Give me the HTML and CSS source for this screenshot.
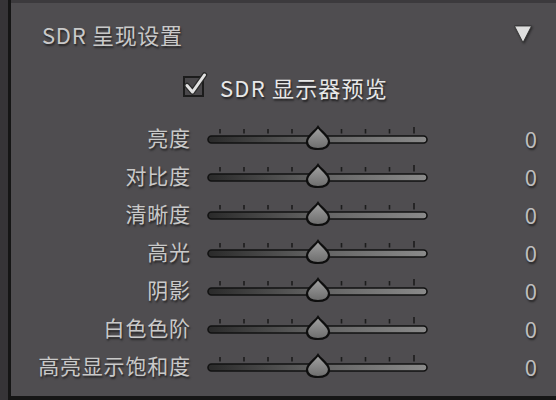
FILE: index.html
```html
<!DOCTYPE html>
<html lang="zh">
<head>
<meta charset="utf-8">
<link rel="stylesheet" href="styles.css">
</head>
<body>
<div class="defs">
  <svg width="0" height="0">
    <defs>
      <linearGradient id="trk" x1="0" y1="0" x2="1" y2="0">
        <stop offset="0" stop-color="#2a2a2a"/>
        <stop offset="0.45" stop-color="#5e5e5e"/>
        <stop offset="1" stop-color="#8a8a8a"/>
      </linearGradient>
      <linearGradient id="thm" x1="0" y1="0" x2="0" y2="1">
        <stop offset="0" stop-color="#a2a2a2"/>
        <stop offset="1" stop-color="#6c6c6c"/>
      </linearGradient>
      <symbol id="sl" viewBox="0 0 222 26">
        <g stroke="#1c1c1c" stroke-width="1.6">
          <line x1="13" y1="4" x2="13" y2="8.5"/>
          <line x1="37" y1="4" x2="37" y2="8.5"/>
          <line x1="61" y1="4" x2="61" y2="8.5"/>
          <line x1="85" y1="4" x2="85" y2="8.5"/>
          <line x1="134.5" y1="4" x2="134.5" y2="8.5"/>
          <line x1="158.5" y1="4" x2="158.5" y2="8.5"/>
          <line x1="182.5" y1="4" x2="182.5" y2="8.5"/>
          <line x1="207" y1="2" x2="207" y2="8.5"/>
        </g>
        <rect x="1" y="11" width="219" height="7" rx="3.5" fill="url(#trk)" stroke="#121212" stroke-width="1.6"/>
        <path d="M111 2 C114 6.5 122 11 122 16.5 C122 21.8 117 24 111 24 C105 24 100 21.8 100 16.5 C100 11 108 6.5 111 2 Z" fill="url(#thm)" stroke="#0e0e0e" stroke-width="2.2"/>
      </symbol>
    </defs>
  </svg>
</div>
<div class="app">
  <div class="strip"></div>
  <div class="panel">
    <div class="header">
      <span class="title">SDR 呈现设置</span>
      <svg class="tri" width="20" height="20" viewBox="0 0 20 20"><path d="M1.5 2 L18.5 2 L10 18.5 Z" fill="#dedede" stroke="#2a2a2a" stroke-width="0.8" stroke-linejoin="round"/></svg>
    </div>
    <div class="check-row">
      <svg class="check" width="26" height="26" viewBox="0 0 26 26">
        <rect x="2" y="6" width="19" height="19" fill="#4a484b" stroke="#1c1c1c" stroke-width="2"/>
        <path d="M5 14.5 L10.5 21 L22.5 4" fill="none" stroke="#2a2a2a" stroke-width="5.5" stroke-linecap="round" stroke-linejoin="round"/>
        <path d="M5 14.5 L10.5 21 L22.5 4" fill="none" stroke="#e2e2e2" stroke-width="3" stroke-linecap="round" stroke-linejoin="round"/>
      </svg>
      <span class="check-label">SDR 显示器预览</span>
    </div>
    <div class="rows">
      <div class="row"><span class="label">亮度</span><svg class="slider" width="222" height="26"><use href="#sl"/></svg><span class="val">0</span></div>
      <div class="row"><span class="label">对比度</span><svg class="slider" width="222" height="26"><use href="#sl"/></svg><span class="val">0</span></div>
      <div class="row"><span class="label">清晰度</span><svg class="slider" width="222" height="26"><use href="#sl"/></svg><span class="val">0</span></div>
      <div class="row"><span class="label">高光</span><svg class="slider" width="222" height="26"><use href="#sl"/></svg><span class="val">0</span></div>
      <div class="row"><span class="label">阴影</span><svg class="slider" width="222" height="26"><use href="#sl"/></svg><span class="val">0</span></div>
      <div class="row"><span class="label">白色色阶</span><svg class="slider" width="222" height="26"><use href="#sl"/></svg><span class="val">0</span></div>
      <div class="row"><span class="label">高亮显示饱和度</span><svg class="slider" width="222" height="26"><use href="#sl"/></svg><span class="val">0</span></div>
    </div>
  </div>
</div>
</body>
</html>
```
FILE: styles.css
```css
html, body {
  margin: 0;
  padding: 0;
  background: #363437;
}
.defs {
  height: 0;
  overflow: hidden;
}
.app {
  display: flex;
  width: 556px;
  height: 400px;
  font-family: "Noto Sans CJK SC", "Noto Sans", sans-serif;
}
.strip {
  width: 8px;
  background: #363437;
  border-right: 3px solid #151515;
  flex: none;
}
.panel {
  flex: 1;
  background: #4f4d50;
  border-top: 3px solid #3c3a3d;
  border-bottom: 4px solid #161616;
  display: flex;
  flex-direction: column;
}
.header {
  height: 62px;
  padding: 0 23px 4px 31px;
  display: flex;
  align-items: center;
  justify-content: space-between;
}
.title {
  font-size: 22px;
  color: #c9c9c9;
  letter-spacing: 0.7px;
  text-shadow: 1px 2px 2px rgba(0, 0, 0, 0.55);
}
.tri {
  display: block;
  filter: drop-shadow(1px 1px 1px rgba(0,0,0,0.5));
}
.check-row {
  height: 36px;
  display: flex;
  align-items: center;
  padding-left: 171px;
  gap: 12px;
}
.check {
  display: block;
  margin-top: -6px;
}
.check-label {
  font-size: 22px;
  color: #e8e8e8;
  letter-spacing: 1.2px;
  text-shadow: 1px 2px 2px rgba(0, 0, 0, 0.6);
}
.rows {
  margin-top: 14px;
  display: flex;
  flex-direction: column;
}
.row {
  height: 38px;
  display: grid;
  grid-template-columns: 179px 222px 1fr;
  align-items: center;
  column-gap: 17px;
}
.label {
  text-align: right;
  font-size: 21px;
  color: #c9c9c9;
  letter-spacing: 0.8px;
  margin-right: -0.8px;
  margin-top: -3px;
  text-shadow: 1px 2px 2px rgba(0, 0, 0, 0.55);
  white-space: nowrap;
}
.slider {
  display: block;
}
.val {
  text-align: right;
  padding-right: 19px;
  font-size: 22px;
  color: #bdbdbd;
  text-shadow: 1px 2px 2px rgba(0, 0, 0, 0.55);
}
```
